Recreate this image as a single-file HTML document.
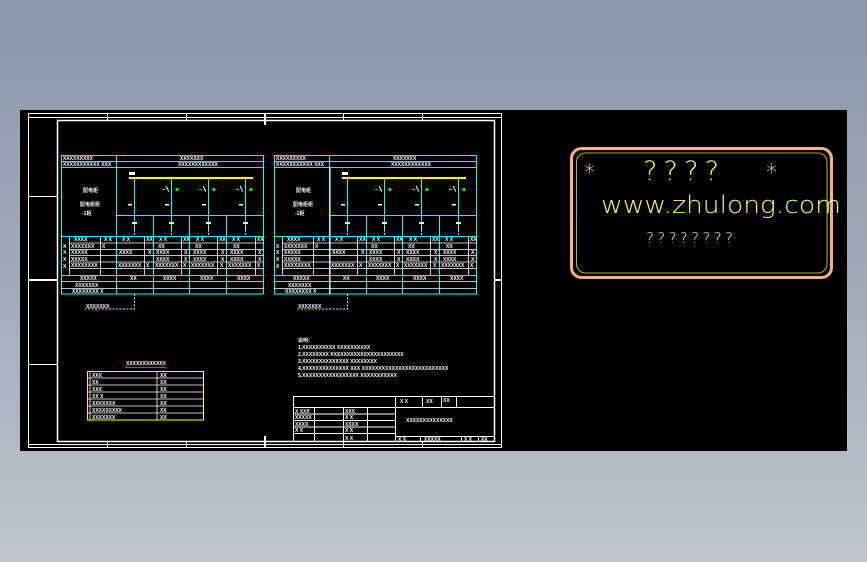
<!DOCTYPE html>
<html><head><meta charset="utf-8"><style>
html,body{margin:0;padding:0;width:867px;height:562px;overflow:hidden}
body{background:linear-gradient(#8997a9,#a4adbb 55%,#c0c5d0)}
svg{position:absolute;left:0;top:0}
.t{font-family:"Liberation Sans","Noto Sans CJK SC",sans-serif;font-weight:bold;fill:#fff;font-size:5px}
</style></head><body>
<svg width="867" height="562" viewBox="0 0 867 562" xmlns="http://www.w3.org/2000/svg">
<rect x="20" y="110" width="827" height="341" fill="#000"/>
<g fill="none" stroke="#fff" stroke-width="1">
<rect x="28.5" y="113.5" width="473" height="334"/>
<rect x="57.5" y="120.5" width="437" height="321" stroke-width="1.5"/>
<line x1="28" y1="117.5" x2="501" y2="117.5"/><line x1="28" y1="444.5" x2="501" y2="444.5"/>
<line x1="28" y1="196.5" x2="57" y2="196.5"/><line x1="28" y1="280" x2="57" y2="280" stroke-width="2"/><line x1="28" y1="364.5" x2="57" y2="364.5"/>
<line x1="107.5" y1="113" x2="107.5" y2="120"/><line x1="186.5" y1="113" x2="186.5" y2="120"/><line x1="265" y1="113" x2="265" y2="125" stroke-width="2"/><line x1="343.5" y1="113" x2="343.5" y2="120"/><line x1="422.5" y1="113" x2="422.5" y2="120"/>
<line x1="107.5" y1="441" x2="107.5" y2="448"/><line x1="186.5" y1="441" x2="186.5" y2="448"/><line x1="265" y1="436" x2="265" y2="448" stroke-width="2"/><line x1="343.5" y1="441" x2="343.5" y2="448"/><line x1="422.5" y1="441" x2="422.5" y2="448"/>
<line x1="494" y1="280" x2="501" y2="280" stroke-width="2"/>
</g>

<g id="tbl">
<g fill="none" stroke="#0ff" stroke-width="1">
<rect x="61.5" y="155.5" width="202" height="138.5"/>
<line x1="61" y1="161.5" x2="264" y2="161.5"/><line x1="61" y1="167.5" x2="264" y2="167.5"/>
<line x1="116.5" y1="155" x2="116.5" y2="294"/>
<line x1="116" y1="215.5" x2="264" y2="215.5"/>
<line x1="61" y1="236.5" x2="264" y2="236.5"/>
<line x1="61" y1="275.5" x2="264" y2="275.5"/>
<line x1="153.5" y1="215" x2="153.5" y2="294"/><line x1="189.5" y1="215" x2="189.5" y2="294"/><line x1="226.5" y1="215" x2="226.5" y2="294"/>
<line x1="134.5" y1="178" x2="134.5" y2="230"/><line x1="171.5" y1="178" x2="171.5" y2="230"/><line x1="208.5" y1="178" x2="208.5" y2="230"/><line x1="245.5" y1="178" x2="245.5" y2="230"/>
</g>
<g stroke="#fff" stroke-width="0.8" fill="none">
<line x1="69" y1="243" x2="264" y2="243"/><line x1="69" y1="249.5" x2="264" y2="249.5"/><line x1="69" y1="255.5" x2="264" y2="255.5"/><line x1="69" y1="262" x2="264" y2="262"/><line x1="69" y1="268.5" x2="264" y2="268.5"/>
<line x1="69.5" y1="236" x2="69.5" y2="275"/><line x1="100.5" y1="236" x2="100.5" y2="275"/><line x1="144.5" y1="236" x2="144.5" y2="275"/><line x1="181.5" y1="236" x2="181.5" y2="275"/><line x1="217.5" y1="236" x2="217.5" y2="275"/><line x1="255.5" y1="236" x2="255.5" y2="275"/>
<line x1="61" y1="281.5" x2="264" y2="281.5"/><line x1="61" y1="288.5" x2="264" y2="288.5"/>
</g>
<line x1="129" y1="178" x2="253" y2="178" stroke="#ff0" stroke-width="2"/>
<g stroke="#ff0" stroke-width="1" stroke-dasharray="2,1.5"><line x1="134.5" y1="226" x2="134.5" y2="236"/><line x1="171.5" y1="226" x2="171.5" y2="236"/><line x1="208.5" y1="226" x2="208.5" y2="236"/><line x1="245.5" y1="226" x2="245.5" y2="236"/></g>
<g fill="#0f0"><circle cx="177" cy="189.5" r="1.6"/><circle cx="214" cy="189.5" r="1.6"/><circle cx="251" cy="189.5" r="1.6"/><rect x="162" y="189" width="3" height="1"/><rect x="199" y="189" width="3" height="1"/><rect x="236" y="189" width="3" height="1"/></g>
<g fill="#fff"><rect x="129" y="172" width="6" height="3"/>
<rect x="128" y="204" width="4" height="1.5"/><rect x="165" y="204" width="4" height="1.5"/><rect x="202" y="204" width="4" height="1.5"/><rect x="239" y="204" width="4" height="1.5"/>
<rect x="132" y="222" width="5" height="2"/><rect x="169" y="222" width="5" height="2"/><rect x="206" y="222" width="5" height="2"/><rect x="243" y="222" width="5" height="2"/>
<rect x="167" y="186" width="1" height="6" transform="rotate(-25 167 189)"/><rect x="204" y="186" width="1" height="6" transform="rotate(-25 204 189)"/><rect x="241" y="186" width="1" height="6" transform="rotate(-25 241 189)"/>
</g>
<text class="t" x="63" y="160">XXXXXXXXX</text><text class="t" x="63" y="166">XXXXXXXXXXX XXX</text>
<text class="t" x="180" y="160">XXXXXXX</text><text class="t" x="178" y="166" font-size="3">XXXXXXXXXXXX</text>
<text class="t" x="83" y="192">配电柜</text><text class="t" x="80" y="206">配电柜柜</text><text class="t" x="82" y="215">-1柜</text>
<g class="t">
<text class="t" x="74" y="241">XXXX</text><text class="t" x="104" y="241">X X</text><text class="t" x="122" y="241">X X</text><text class="t" x="146" y="241">XX</text><text class="t" x="159" y="241">X X</text><text class="t" x="183" y="241">XX</text><text class="t" x="196" y="241">X X</text><text class="t" x="219" y="241">XX</text><text class="t" x="232" y="241">X X</text><text class="t" x="257" y="241">XX</text>
<text class="t" x="71" y="248">XXXXXXX</text><text class="t" x="102" y="248">X</text><text class="t" x="158" y="248">XX</text><text class="t" x="195" y="248">XX</text><text class="t" x="233" y="248">XX</text>
<text class="t" x="71" y="254">XXXXX</text><text class="t" x="119" y="254">XXXX</text><text class="t" x="148" y="254">X</text><text class="t" x="156" y="254">XXXX</text><text class="t" x="184" y="254">X</text><text class="t" x="193" y="254">XXXX</text><text class="t" x="221" y="254">X</text><text class="t" x="230" y="254">XXXX</text><text class="t" x="258" y="254">X</text>
<text class="t" x="71" y="261">XXXXX</text><text class="t" x="156" y="261">XXXX</text><text class="t" x="184" y="261">X</text><text class="t" x="193" y="261">XXXX</text><text class="t" x="221" y="261">X</text><text class="t" x="230" y="261">XXXX</text><text class="t" x="258" y="261">X</text>
<text class="t" x="71" y="267">XXXXXXXX</text><text class="t" x="118" y="267">XXXXXXX</text><text class="t" x="146" y="267">X</text><text class="t" x="155" y="267">XXXXXXX</text><text class="t" x="183" y="267">X</text><text class="t" x="191" y="267">XXXXXXX</text><text class="t" x="220" y="267">X</text><text class="t" x="228" y="267">XXXXXXX</text><text class="t" x="257" y="267">X</text>
<text class="t" x="80" y="280">XXXXX</text><text class="t" x="130" y="280">XX</text><text class="t" x="163" y="280">XXXX</text><text class="t" x="200" y="280">XXXX</text><text class="t" x="237" y="280">XXXX</text>
<text class="t" x="75" y="287">XXXXXXX</text><text class="t" x="72" y="293">XXXXXXXX X</text>
<text class="t" x="63" y="248">X</text><text class="t" x="63" y="254">X</text><text class="t" x="63" y="261">X</text><text class="t" x="63" y="268">X</text>
</g>
</g>
<g transform="translate(213,0)"><use href="#tbl"/></g>
<line x1="330" y1="168" x2="330" y2="294" stroke="#fff" stroke-width="1"/>
<g stroke="#ff0" stroke-width="1" stroke-dasharray="2,1.5" fill="none">
<path d="M134.5 294V309H85"/><path d="M347.5 294V309H297"/>
</g>
<text class="t" x="86" y="308">XXXXXXX</text><text class="t" x="298" y="308">XXXXXXX</text>

<text class="t" x="298" y="342">说明:</text>
<text class="t" x="298" y="349">1.XXXXXXXXXX  XXXXXXXXXX</text>
<text class="t" x="298" y="356">2.XXXXXXXX XXXXXXXXXXXXXXXXXXXXXX</text>
<text class="t" x="298" y="363">3.XXXXXXXXXXXXXX XXXXXXXX</text>
<text class="t" x="298" y="370">4.XXXXXXXXXXXXXX XXX XXXXXXXXXXXXXXXXXXXXXXXXXX</text>
<text class="t" x="298" y="377">5.XXXXXXXXXXXXXXXXX XXXXXXXXXXX</text>

<text class="t" x="126" y="365">XXXXXXXXXXXX</text>
<line x1="125" y1="367.5" x2="166" y2="367.5" stroke="#f22" stroke-width="1"/>
<g stroke="#fff" stroke-width="0.8" fill="none">
<line x1="88" y1="378" x2="204" y2="378"/><line x1="88" y1="385" x2="204" y2="385"/><line x1="88" y1="392" x2="204" y2="392"/><line x1="88" y1="399" x2="204" y2="399"/><line x1="88" y1="406" x2="204" y2="406"/><line x1="88" y1="413" x2="204" y2="413"/>
<line x1="90" y1="371" x2="90" y2="420"/><line x1="157" y1="371" x2="157" y2="420"/>
</g>
<rect x="87.5" y="371.5" width="116" height="48.5" fill="none" stroke="#ff0" stroke-width="1"/>
<text class="t" x="92" y="377">XXX</text><text class="t" x="92" y="384">XX</text><text class="t" x="92" y="391">XXX</text><text class="t" x="92" y="398">XX X</text><text class="t" x="92" y="405">XXXXXXX</text><text class="t" x="92" y="412">XXXXXXXXX</text><text class="t" x="92" y="419">XXXXXXX</text>
<text class="t" x="160" y="377">XX</text><text class="t" x="160" y="384">XX</text><text class="t" x="160" y="391">XX</text><text class="t" x="160" y="398">XX</text><text class="t" x="160" y="405">XX</text><text class="t" x="160" y="412">XX</text><text class="t" x="160" y="419">XX</text>

<g stroke="#fff" stroke-width="1" fill="none">
<rect x="293.5" y="396.5" width="201" height="45"/>
<line x1="293" y1="407.5" x2="495" y2="407.5"/>
<line x1="293" y1="414" x2="395" y2="414"/><line x1="293" y1="420.5" x2="395" y2="420.5"/><line x1="293" y1="427" x2="395" y2="427"/><line x1="293" y1="433.5" x2="395" y2="433.5"/>
<line x1="395" y1="436.5" x2="495" y2="436.5"/>
<line x1="314.5" y1="407" x2="314.5" y2="442"/><line x1="343.5" y1="407" x2="343.5" y2="442"/><line x1="367.5" y1="407" x2="367.5" y2="442"/><line x1="395.5" y1="396" x2="395.5" y2="442"/>
<line x1="422.5" y1="396" x2="422.5" y2="407"/><line x1="441.5" y1="396" x2="441.5" y2="407"/><line x1="456.5" y1="396" x2="456.5" y2="407"/>
<line x1="420.5" y1="436" x2="420.5" y2="442"/><line x1="461.5" y1="436" x2="461.5" y2="442"/><line x1="478.5" y1="436" x2="478.5" y2="442"/>
</g>
<text class="t" x="400" y="403">X X</text><text class="t" x="426" y="403">XX</text><text class="t" x="443" y="402">XX</text>
<text class="t" x="295" y="413">X XXX</text><text class="t" x="295" y="419">XXXXX</text><text class="t" x="295" y="426">XXXX</text><text class="t" x="295" y="432">X  X</text>
<text class="t" x="345" y="413">XXX</text><text class="t" x="345" y="419">X  X</text><text class="t" x="345" y="426">XXXX</text><text class="t" x="345" y="432">X  X</text><text class="t" x="345" y="440">X  X</text>
<text class="t" x="406" y="422">XXXXXXXXXXXXXX</text>
<text class="t" x="398" y="441">X X</text><text class="t" x="424" y="441">XXXXX</text><text class="t" x="464" y="441">X X</text><text class="t" x="481" y="441">XX</text>

<rect x="571.5" y="148.5" width="260" height="129" rx="10" fill="none" stroke="#f9b27a" stroke-width="3"/>
<rect x="576.5" y="153" width="250.5" height="120" rx="9" fill="none" stroke="#e6e62a" stroke-width="0.8"/>
<g font-family="DejaVu Sans,sans-serif" fill="#ffff60" font-weight="200">
<text x="584" y="180" font-size="22">*</text>
<text x="766" y="180" font-size="22">*</text>
<text x="643" y="180" font-size="27" textLength="76" lengthAdjust="spacing">????</text>
<text x="601" y="213" font-size="24" textLength="240" lengthAdjust="spacingAndGlyphs">www.zhulong.com</text>
<text x="646" y="243" font-size="15" textLength="87" lengthAdjust="spacing">????????</text>
</g>
</svg>
</body></html>
